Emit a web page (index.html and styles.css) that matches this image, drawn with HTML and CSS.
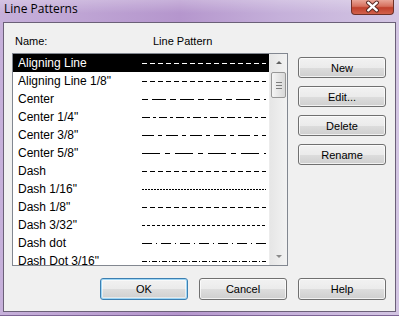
FILE: index.html
```html
<!DOCTYPE html>
<html lang="en">
<head>
    <meta charset="UTF-8">
    <title>Line Patterns</title>
    <link rel="stylesheet" href="styles.css">
</head>
<body>
    <div class="window">
        <div class="titlebar">
            <span class="title">Line Patterns</span>
            <div class="close">
                <svg width="43" height="15" viewBox="0 0 43 15">
                    <path d="M17 3.5 L26 11.5 M26 3.5 L17 11.5" stroke="#5b2a24" stroke-width="4.5" stroke-linecap="round"/>
                    <path d="M17 3.5 L26 11.5 M26 3.5 L17 11.5" stroke="#fff" stroke-width="2.5" stroke-linecap="round"/>
                </svg>
            </div>
        </div>

        <div class="client">
            <div class="head">
                <span class="head-name">Name:</span>
                <span>Line Pattern</span>
            </div>

            <div class="main">
                <div class="listbox">
                    <ul class="rows">
                        <li class="row sel"><span class="name">Aligning Line</span><svg class="pat" width="124" height="18"><line x1="0" y1="9.5" x2="124" y2="9.5" stroke-dasharray="5 3"/></svg></li>
                        <li class="row"><span class="name">Aligning Line 1/8"</span><svg class="pat" width="124" height="18"><line x1="0" y1="9.5" x2="124" y2="9.5" stroke-dasharray="5 3"/></svg></li>
                        <li class="row"><span class="name">Center</span><svg class="pat" width="124" height="18"><line x1="0" y1="9.5" x2="124" y2="9.5" stroke-dasharray="6 4 14 4"/></svg></li>
                        <li class="row"><span class="name">Center 1/4"</span><svg class="pat" width="124" height="18"><line x1="0" y1="9.5" x2="124" y2="9.5" stroke-dasharray="8 3 3 3"/></svg></li>
                        <li class="row"><span class="name">Center 3/8"</span><svg class="pat" width="124" height="18"><line x1="0" y1="9.5" x2="124" y2="9.5" stroke-dasharray="12 4 4 4"/></svg></li>
                        <li class="row"><span class="name">Center 5/8"</span><svg class="pat" width="124" height="18"><line x1="0" y1="9.5" x2="124" y2="9.5" stroke-dasharray="18 5 5 5"/></svg></li>
                        <li class="row"><span class="name">Dash</span><svg class="pat" width="124" height="18"><line x1="0" y1="9.5" x2="124" y2="9.5" stroke-dasharray="5 3"/></svg></li>
                        <li class="row"><span class="name">Dash 1/16"</span><svg class="pat" width="124" height="18"><line x1="0" y1="9.5" x2="124" y2="9.5" stroke-dasharray="2 1"/></svg></li>
                        <li class="row"><span class="name">Dash 1/8"</span><svg class="pat" width="124" height="18"><line x1="0" y1="9.5" x2="124" y2="9.5" stroke-dasharray="5 3"/></svg></li>
                        <li class="row"><span class="name">Dash 3/32"</span><svg class="pat" width="124" height="18"><line x1="0" y1="9.5" x2="124" y2="9.5" stroke-dasharray="3 2"/></svg></li>
                        <li class="row"><span class="name">Dash dot</span><svg class="pat" width="124" height="18"><line x1="0" y1="9.5" x2="124" y2="9.5" stroke-dasharray="10 4 1 4"/></svg></li>
                        <li class="row"><span class="name">Dash Dot 3/16"</span><svg class="pat" width="124" height="18"><line x1="0" y1="9.5" x2="124" y2="9.5" stroke-dasharray="5 2 1 2"/></svg></li>
                    </ul>
                    <div class="vscroll">
                        <div class="arrow"><span class="tri-up"></span></div>
                        <div class="track">
                            <div class="thumb"><span class="grip"></span></div>
                        </div>
                        <div class="arrow"><span class="tri-down"></span></div>
                    </div>
                </div>

                <div class="side">
                    <button class="btn">New</button>
                    <button class="btn">Edit...</button>
                    <button class="btn">Delete</button>
                    <button class="btn">Rename</button>
                </div>
            </div>

            <div class="foot">
                <button class="btn btn-default">OK</button>
                <button class="btn">Cancel</button>
                <button class="btn">Help</button>
            </div>
        </div>
    </div>
</body>
</html>
```

FILE: styles.css
```css
body {
    margin: 0;
    padding: 0;
    font-family: "Liberation Sans", Arial, sans-serif;
    background: #b49bcb;
}
.window {
    width: 399px;
    height: 316px;
    box-sizing: border-box;
    padding: 0 3px 4px 3px;
    background: linear-gradient(to right, #c6b0da 0%, #b596cd 45%, #c5b0da 70%, #d3c5e3 100%);
    border-bottom: 1px solid #7d6495;
}
.titlebar {
    height: 22px;
    display: flex;
    justify-content: space-between;
    align-items: flex-start;
    margin: 0 -3px;
    background: linear-gradient(to bottom, rgba(255, 255, 255, 0.25), rgba(255, 255, 255, 0) 60%);
}
.title {
    font-family: "Open Sans", "Liberation Sans", sans-serif;
    font-size: 12px;
    line-height: 14px;
    padding: 2px 0 0 4px;
    color: #000;
}
.close {
    width: 43px;
    height: 15px;
    margin-right: 5px;
    box-sizing: border-box;
    border: 1px solid #6e3128;
    border-top: none;
    border-radius: 0 0 4px 4px;
    background: linear-gradient(to bottom, #e9a597 0%, #d6705e 45%, #c0402c 55%, #d2614c 100%);
    display: flex;
    align-items: center;
    justify-content: center;
}
.close svg {
    display: block;
    margin-top: -1px;
}
.client {
    height: 290px;
    box-sizing: border-box;
    border: 1px solid #6b6078;
    background-color: #f0f0f0;
    font-size: 11px;
    color: #000;
}
.head {
    display: flex;
    padding: 12px 0 0 11px;
    line-height: 13px;
}
.head-name {
    width: 138px;
}
.main {
    display: flex;
    gap: 10px;
    margin-top: 5px;
    padding: 0 9px 0 8px;
}
.listbox {
    width: 276px;
    height: 213px;
    box-sizing: border-box;
    border: 1px solid #828790;
    background-color: #fff;
    display: flex;
}
.rows {
    list-style: none;
    margin: 0;
    padding: 0;
    flex: 1;
    overflow: hidden;
}
.row {
    display: flex;
    align-items: center;
    height: 18px;
    padding-left: 5px;
    font-size: 12px;
    line-height: 18px;
    white-space: nowrap;
    color: #000;
}
.row.sel {
    background-color: #000;
    color: #fff;
}
.name {
    width: 124px;
    flex: none;
    overflow: hidden;
}
.pat {
    display: block;
    flex: none;
}
.pat line {
    stroke: currentColor;
    stroke-width: 1;
}
.vscroll {
    width: 17px;
    display: flex;
    flex-direction: column;
    background: linear-gradient(to right, #e6e6e6, #f2f2f2);
    border-left: 1px solid #ececec;
}
.arrow {
    height: 17px;
    flex: none;
    display: flex;
    align-items: center;
    justify-content: center;
}
.tri-up {
    width: 0;
    height: 0;
    border-left: 3px solid transparent;
    border-right: 3px solid transparent;
    border-bottom: 3px solid #606060;
}
.tri-down {
    width: 0;
    height: 0;
    border-left: 3px solid transparent;
    border-right: 3px solid transparent;
    border-top: 3px solid #8a8a8a;
}
.track {
    flex: 1;
    padding: 1px 1px 0 1px;
}
.thumb {
    height: 26px;
    box-sizing: border-box;
    border: 1px solid #979797;
    border-radius: 2px;
    background: linear-gradient(to right, #f5f5f5, #e6e6e6 50%, #d9d9d9);
    display: flex;
    align-items: center;
    justify-content: center;
}
.grip {
    width: 6px;
    height: 5px;
    border-top: 1px solid #7d7d7d;
    border-bottom: 1px solid #7d7d7d;
    background: linear-gradient(to bottom, transparent 2px, #7d7d7d 2px, #7d7d7d 3px, transparent 3px);
}
.side {
    display: flex;
    flex-direction: column;
    gap: 8px;
    padding-top: 4px;
}
.btn {
    width: 88px;
    height: 21px;
    padding: 0;
    font-family: "Liberation Sans", Arial, sans-serif;
    font-size: 11px;
    font-weight: normal;
    color: #000;
    border: 1px solid #707070;
    border-radius: 3px;
    background: linear-gradient(to bottom, #f2f2f2 0%, #ebebeb 50%, #dddddd 51%, #cfcfcf 100%);
    box-shadow: inset 0 0 0 1px rgba(255, 255, 255, 0.7);
}
.foot {
    display: flex;
    justify-content: flex-end;
    gap: 11px;
    margin-top: 12px;
    padding-right: 9px;
}
.foot .btn {
    height: 22px;
}
.btn-default {
    border-color: #3c7fb1;
    box-shadow: inset 0 0 0 1px #9fd6f5, inset 0 0 0 2px rgba(255, 255, 255, 0.5);
}
```
